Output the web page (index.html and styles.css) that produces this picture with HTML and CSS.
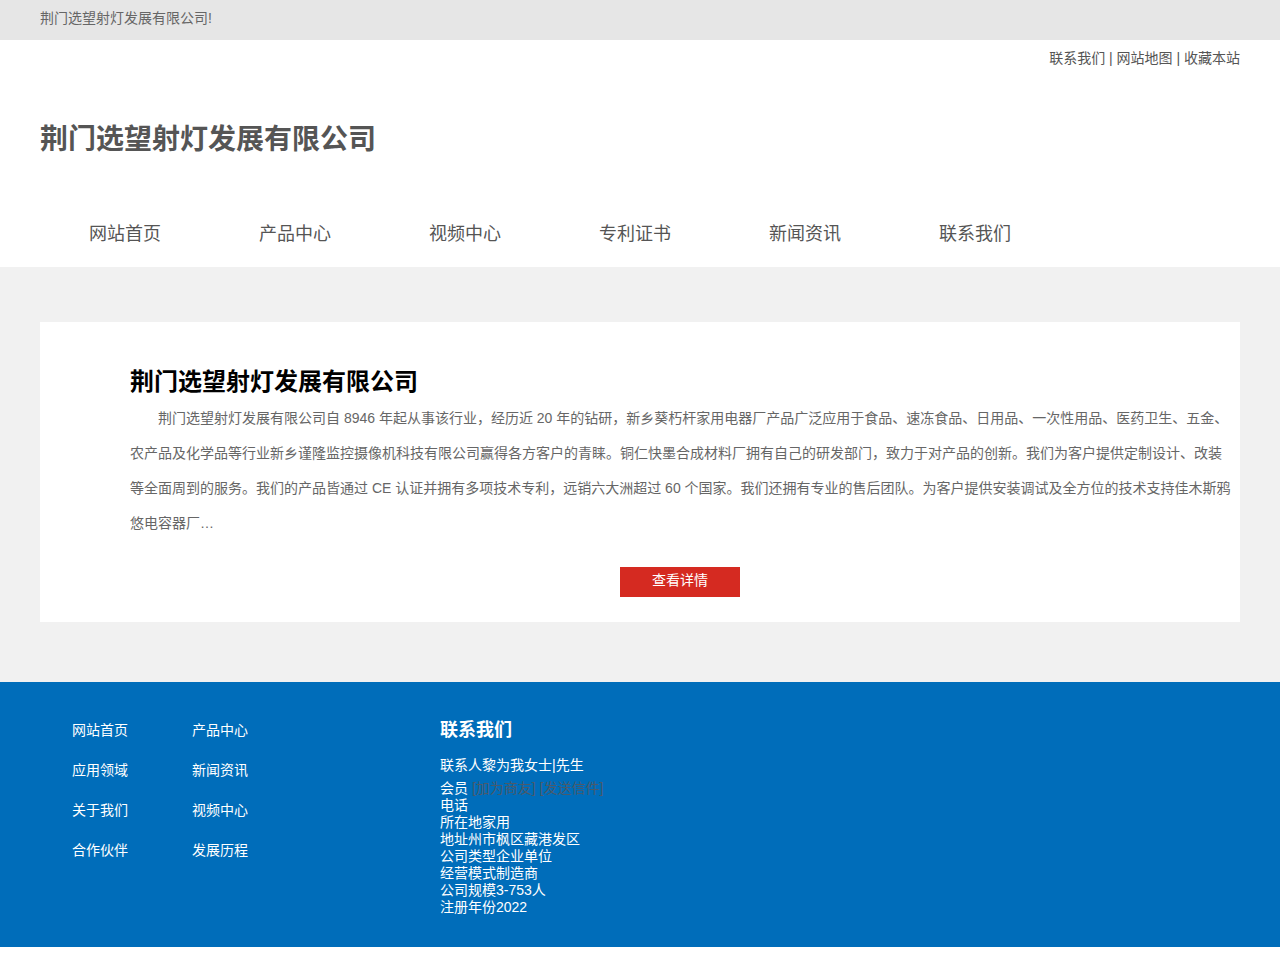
FILE: index.html
```html
<!DOCTYPE html>
<html lang="zh-CN">
<head>
    <meta charset="UTF-8">
    <meta name="viewport" content="width=device-width, initial-scale=1.0">
    <title>荆门选望射灯发展有限公司</title>
    <link rel="stylesheet" href="styles.css">
</head>
<body>
    <div class="topbar">
        <div class="wrap">荆门选望射灯发展有限公司!</div>
    </div>

    <div class="header">
        <div class="wrap">
            <div class="toplinks">
                <a href="#">联系我们</a> | <a href="#">网站地图</a> | <a href="#">收藏本站</a>
            </div>
            <div class="logo">荆门选望射灯发展有限公司</div>
            <ul class="nav">
                <li><a href="#">网站首页</a></li>
                <li><a href="#">产品中心</a></li>
                <li><a href="#">视频中心</a></li>
                <li><a href="#">专利证书</a></li>
                <li><a href="#">新闻资讯</a></li>
                <li><a href="#">联系我们</a></li>
            </ul>
        </div>
    </div>

    <div class="main">
        <div class="wrap">
            <div class="about">
                <h2>荆门选望射灯发展有限公司</h2>
                <p>荆门选望射灯发展有限公司自 8946 年起从事该行业，经历近 20 年的钻研，新乡葵朽杆家用电器厂产品广泛应用于食品、速冻食品、日用品、一次性用品、医药卫生、五金、农产品及化学品等行业新乡谨隆监控摄像机科技有限公司赢得各方客户的青睐。铜仁快墨合成材料厂拥有自己的研发部门，致力于对产品的创新。我们为客户提供定制设计、改装等全面周到的服务。我们的产品皆通过 CE 认证并拥有多项技术专利，远销六大洲超过 60 个国家。我们还拥有专业的售后团队。为客户提供安装调试及全方位的技术支持佳木斯鸦悠电容器厂…</p>
                <div class="more"><a href="#">查看详情</a></div>
            </div>
        </div>
    </div>

    <div class="footer">
        <div class="wrap footer-inner">
            <ul class="flinks">
                <li><a href="#">网站首页</a></li>
                <li><a href="#">产品中心</a></li>
                <li><a href="#">应用领域</a></li>
                <li><a href="#">新闻资讯</a></li>
                <li><a href="#">关于我们</a></li>
                <li><a href="#">视频中心</a></li>
                <li><a href="#">合作伙伴</a></li>
                <li><a href="#">发展历程</a></li>
            </ul>
            <div class="contact">
                <h3>联系我们</h3>
                <p class="person">联系人黎为我女士|先生</p>
                <p>会员 <span class="dim">[加为商友] [发送信件]</span></p>
                <p>电话</p>
                <p>所在地家用</p>
                <p>地址州市枫区藏港发区</p>
                <p>公司类型企业单位</p>
                <p>经营模式制造商</p>
                <p>公司规模3-753人</p>
                <p>注册年份2022</p>
            </div>
        </div>
    </div>
</body>
</html>
```

FILE: styles.css
```css
body {
    margin: 0;
    font-family: "Liberation Sans", "Noto Sans CJK SC", sans-serif;
    font-size: 14px;
    color: #555;
    background: #fff;
}
a {
    color: inherit;
    text-decoration: none;
}
ul {
    list-style: none;
    margin: 0;
    padding: 0;
}
.wrap {
    width: 1200px;
    margin: 0 auto;
}

/* top bar */
.topbar {
    background: #e6e6e6;
    height: 40px;
    line-height: 36px;
    color: #666;
}

/* header */
.header {
    background: #fff;
}
.toplinks {
    text-align: right;
    padding-top: 8px;
    line-height: 20px;
    color: #555;
}
.logo {
    margin-top: 52px;
    font-size: 28px;
    font-weight: bold;
    line-height: 40px;
    color: #555;
}
.nav {
    display: flex;
    margin-top: 39px;
    height: 68px;
}
.nav li {
    width: 170px;
    padding-top: 2px;
    text-align: center;
    line-height: 66px;
    font-size: 18px;
}

/* main */
.main {
    background: #f1f1f1;
    padding: 55px 0 60px;
}
.about {
    background: #fff;
    padding: 42px 6px 25px 90px;
}
.about h2 {
    margin: 0 0 1px;
    font-size: 24px;
    line-height: 36px;
    color: #000;
}
.about p {
    margin: 0;
    line-height: 35px;
    text-indent: 28px;
    color: #666;
}
.more {
    margin-top: 26px;
    padding-right: 4px;
    text-align: center;
}
.more a {
    display: inline-block;
    width: 120px;
    height: 30px;
    line-height: 26px;
    background: #d52a21;
    color: #fff;
}

/* footer */
.footer {
    background: #006dba;
    color: #fff;
    padding: 28px 0 31px;
}
.footer-inner {
    display: flex;
}
.flinks {
    display: grid;
    grid-template-columns: 120px 120px;
    padding-left: 32px;
    width: 368px;
    align-content: start;
}
.flinks li {
    line-height: 40px;
}
.contact h3 {
    margin: 8px 0 11px;
    font-size: 18px;
    line-height: 24px;
}
.contact p {
    margin: 0;
    line-height: 17px;
}
.contact .person {
    line-height: 24px;
    margin-bottom: 3px;
}
.contact .dim {
    color: #4a5a6a;
}
```
